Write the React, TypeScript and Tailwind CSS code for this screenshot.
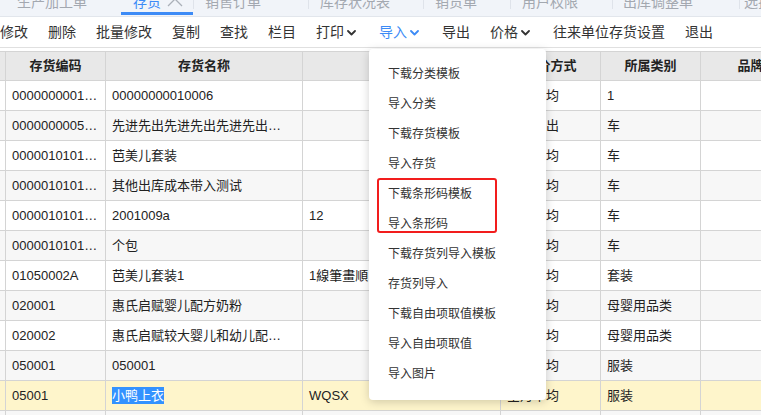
import React from "react";

const FONT = "font-['Liberation_Sans','Noto_Sans_CJK_SC',sans-serif]";

function Chevron({ color }: { color: string }) {
  return (
    <svg width="9" height="6" viewBox="0 0 9 6" className="ml-[3px] mt-[1px]">
      <polyline points="1,1 4.5,4.5 8,1" fill="none" stroke={color} strokeWidth="1.8" strokeLinecap="round" strokeLinejoin="round" />
    </svg>
  );
}

type Row = { code: string; name: string; spec: string; method: string; cat: string; sel?: boolean };

const rows: Row[] = [
  { code: "0000000001…", name: "00000000010006", spec: "", method: "全月平均", cat: "1" },
  { code: "0000000005…", name: "先进先出先进先出先进先出…", spec: "", method: "先进先出", cat: "车" },
  { code: "0000010101…", name: "芭美儿套装", spec: "", method: "全月平均", cat: "车" },
  { code: "0000010101…", name: "其他出库成本带入测试", spec: "", method: "全月平均", cat: "车" },
  { code: "0000010101…", name: "2001009a", spec: "12", method: "全月平均", cat: "车" },
  { code: "0000010101…", name: "个包", spec: "", method: "全月平均", cat: "车" },
  { code: "01050002A", name: "芭美儿套装1", spec: "1線筆畫順", method: "全月平均", cat: "套装" },
  { code: "020001", name: "惠氏启赋婴儿配方奶粉", spec: "", method: "全月平均", cat: "母婴用品类" },
  { code: "020002", name: "惠氏启赋较大婴儿和幼儿配…", spec: "", method: "全月平均", cat: "母婴用品类" },
  { code: "050001", name: "050001", spec: "", method: "全月平均", cat: "服装" },
  { code: "05001", name: "小鸭上衣", spec: "WQSX", method: "全月平均", cat: "服装", sel: true },
  { code: "05002", name: "小鸭裤子", spec: "", method: "全月平均", cat: "服装" },
];

const menuItems = [
  "下载分类模板",
  "导入分类",
  "下载存货模板",
  "导入存货",
  "下载条形码模板",
  "导入条形码",
  "下载存货列导入模板",
  "存货列导入",
  "下载自由项取值模板",
  "导入自由项取值",
  "导入图片",
];

function Sep() {
  return <div className="w-px h-[9px] bg-[#dfe3ea] shrink-0" />;
}

function Tab({ label, w, pl }: { label: string; w: string; pl: string }) {
  return (
    <div className={`${w} ${pl} shrink-0 h-[16px] overflow-hidden`}>
      <div className="-mt-[5px] leading-[14px] text-[14px] text-[#a3a8b0] whitespace-nowrap">{label}</div>
    </div>
  );
}

export default function App() {
  const tools: { label: string; chev?: boolean; active?: boolean }[] = [
    { label: "修改" },
    { label: "删除" },
    { label: "批量修改" },
    { label: "复制" },
    { label: "查找" },
    { label: "栏目" },
    { label: "打印", chev: true },
    { label: "导入", chev: true, active: true },
    { label: "导出" },
    { label: "价格", chev: true },
    { label: "往来单位存货设置" },
    { label: "退出" },
  ];

  const cell = "h-full shrink-0 border-r border-[#d4d4d4] flex items-center px-[6px] whitespace-nowrap overflow-hidden";

  return (
    <div className={`${FONT} relative w-[761px] h-[415px] overflow-hidden bg-white text-[#222]`}>
      {/* Tab bar */}
      <div className="h-[17px] bg-[#f1f4f9] border-b border-[#e2e6ec] flex items-start overflow-hidden">
        <Tab label="生产加工单" w="w-[121px]" pl="pl-[17px]" />
        <div className="w-[72px] shrink-0 h-[15px] border-b-[3px] border-[#3d8bf6] pl-[12px] flex items-start relative overflow-hidden">
          <div className="-mt-[5px] leading-[14px] text-[14px] text-[#3d8bf6] whitespace-nowrap">存货</div>
          <svg width="18" height="18" viewBox="0 0 18 18" className="absolute left-[45px] top-[-10px]">
            <line x1="2" y1="2" x2="16" y2="16" stroke="#aab0b8" strokeWidth="1.3" />
            <line x1="16" y1="2" x2="2" y2="16" stroke="#aab0b8" strokeWidth="1.3" />
          </svg>
        </div>
        <Sep />
        <Tab label="销售订单" w="w-[114px]" pl="pl-[11px]" />
        <Sep />
        <Tab label="库存状况表" w="w-[114px]" pl="pl-[11px]" />
        <Sep />
        <Tab label="销货单" w="w-[86px]" pl="pl-[11px]" />
        <Sep />
        <Tab label="用户权限" w="w-[101px]" pl="pl-[11px]" />
        <Sep />
        <Tab label="出库调整单" w="w-[126px]" pl="pl-[10px]" />
        <Sep />
        <Tab label="选择单据" w="w-[100px]" pl="pl-[4px]" />
      </div>

      {/* Toolbar */}
      <div className="h-[31px] border-b border-[#e0e0e0] flex items-center gap-[20px] text-[14px] leading-[18px] whitespace-nowrap">
        {tools.map((t, i) => (
          <div key={i} className={`flex items-center shrink-0 ${t.chev ? "pr-[3px]" : ""} ${t.active ? "text-[#3d8bf6]" : "text-[#333]"}`}>
            <span>{t.label}</span>
            {t.chev && <Chevron color={t.active ? "#3d8bf6" : "#333"} />}
          </div>
        ))}
      </div>

      <div className="h-[3px]" />

      {/* Table */}
      <div className="w-[761px] overflow-hidden text-[13px] leading-[18px]">
        <div className="w-[806px]">
          <div className="h-[30px] flex bg-[#e8e8e8] border-y border-[#d4d4d4] font-bold text-[#222]">
            <div className={`${cell} w-[6px] !px-0`} />
            <div className={`${cell} w-[100px] justify-center`}>存货编码</div>
            <div className={`${cell} w-[197px] justify-center`}>存货名称</div>
            <div className={`${cell} w-[198px] justify-center`} />
            <div className={`${cell} w-[100px] justify-center`}>计价方式</div>
            <div className={`${cell} w-[100px] justify-center`}>所属类别</div>
            <div className={`${cell} w-[100px] justify-center`}>品牌</div>
          </div>
          {rows.map((r, i) => (
            <div
              key={i}
              className={`h-[30px] flex border-b border-[#d4d4d4] ${r.sel ? "bg-[#fef5cb]" : i % 2 === 1 ? "bg-[#f7f7f7]" : "bg-white"}`}
            >
              <div className={`${cell} w-[6px] !px-0`} />
              <div className={`${cell} w-[100px]`}>{r.code}</div>
              <div className={`${cell} w-[197px]`}>
                {r.sel ? <span className="bg-[#3392ff] text-white leading-[17px]">{r.name}</span> : r.name}
              </div>
              <div className={`${cell} w-[198px]`}>{r.spec}</div>
              <div className={`${cell} w-[100px]`}>{r.method}</div>
              <div className={`${cell} w-[100px]`}>{r.cat}</div>
              <div className={`${cell} w-[100px]`} />
            </div>
          ))}
        </div>
      </div>

      {/* Dropdown menu */}
      <div className="absolute left-[369px] top-[49px] w-[177px] h-[351px] bg-white rounded-[4px] shadow-[0_2px_10px_rgba(0,0,0,0.18)] pt-[10px]">
        {menuItems.map((m) => (
          <div key={m} className="h-[30px] flex items-center pl-[19px] text-[12px] text-[#333] whitespace-nowrap">
            {m}
          </div>
        ))}
      </div>

      {/* Red annotation box */}
      <div className="absolute left-[377px] top-[178px] w-[120px] h-[55px] border-2 border-[#f21d1d] rounded-[3px]" />
    </div>
  );
}
